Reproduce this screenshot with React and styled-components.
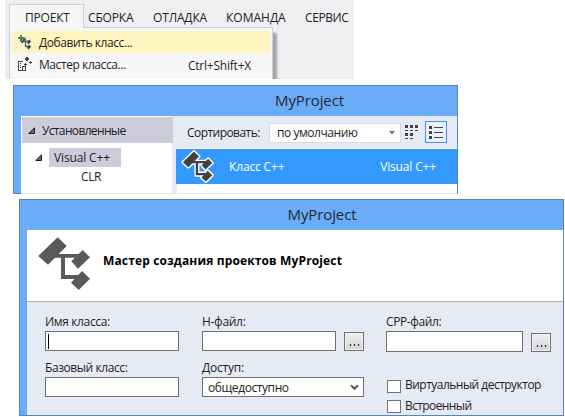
import React from 'react';
import styled, { createGlobalStyle } from 'styled-components';

const Global = createGlobalStyle`
  *, *::before, *::after { box-sizing: border-box; }
  body { margin: 0; background: #fff; overflow: hidden; }
`;

const Page = styled.main`
  width: 565px;
  height: 417px;
  display: flex;
  flex-direction: column;
  align-items: flex-start;
  font: 12px/16px 'Open Sans', 'Noto Sans', sans-serif;
  color: #1e1e1e;
`;

const Text = styled.span`
  white-space: pre;
  letter-spacing: ${(p) => p.$track || 0}px;
`;

/* Menu */
const MenuArea = styled.section`
  width: 349px;
  height: 79px;
  margin-left: 5px;
  padding: 4px 0 0 4px;
  background: #efeff2;
  overflow: hidden;
`;
const MenuBar = styled.nav`
  display: flex;
  height: 24px;
`;
const MenuTab = styled.div`
  position: relative;
  z-index: 1;
  width: 75px;
  height: 24px;
  padding: 5px 0 0 15px;
  border: 1px solid #ccceDB;
  border-bottom: 0;
  background: #f7f7f7;
`;
const MenuTitle = styled.div`
  width: ${(p) => p.$width}px;
  padding: 6px 0 0 4px;
`;
const MenuPopup = styled.div`
  width: 264px;
  height: 60px;
  margin-top: -1px;
  padding: 3px 2px 0;
  border: 1px solid #ccceDB;
  background: #f7f7f7;
  box-shadow: 5px 5px 2px -1px #a5a5a8;
`;
const MenuItem = styled.div`
  display: flex;
  align-items: center;
  height: 22px;
  padding: 1px 19px 0 5px;
  background: ${(p) => (p.$active ? '#fdf4bf' : 'transparent')};
  & > svg { margin: -2px 6px 0 0; }
  & > :nth-child(3) { margin: 3px 0 0 auto; }
`;

/* Windows */
const Window = styled.section`
  width: ${(p) => p.$width}px;
  height: ${(p) => p.$height}px;
  margin: ${(p) => p.$margin};
  border: 1px solid #4d88c4;
  background: #6aacf7;
  display: flex;
  flex-direction: column;
`;
const TitleBar = styled.header`
  height: 30px;
  flex: none;
  display: flex;
  justify-content: center;
  padding: ${(p) => p.$top}px 0 0 ${(p) => p.$shift}px;
  font-size: 15px;
  line-height: 20px;
  color: #262a30;
`;

const TemplateBody = styled.div`
  display: flex;
  width: 436px;
  height: 78px;
  margin-left: 7px;
  flex: none;
  background: #e6eaf5;
`;
const Sidebar = styled.aside`
  width: 151px;
  height: 77px;
  padding: 1px 0 0 1px;
  background: #fff;
`;
const SidebarHeader = styled.div`
  display: flex;
  align-items: center;
  width: 151px;
  height: 26px;
  padding: 1px 0 0 6px;
  background: #ccccdb;
  & > svg { margin-right: 6px; }
`;
const TreeRow = styled.div`
  display: flex;
  align-items: center;
  height: 19px;
  margin-top: 5px;
  padding-left: 13px;
  & > svg { margin-right: 6px; }
`;
const SelectedNode = styled.div`
  width: 72px;
  height: 19px;
  padding: 2px 0 0 5px;
  background: #ccccdb;
`;
const TreeLeaf = styled.div`
  padding: 2px 0 0 59px;
`;
const Templates = styled.div`
  display: flex;
  flex-direction: column;
  width: 280px;
  height: 77px;
  margin-left: 5px;
  background: #fff;
`;
const SortBar = styled.div`
  display: flex;
  flex: none;
  height: 32px;
  padding: 5px 10px 0;
  background: #e6eaf5;
`;
const SortLabel = styled.div`
  width: 82px;
  padding-top: 4px;
`;
const SortSelect = styled.div`
  display: flex;
  align-items: center;
  justify-content: space-between;
  width: 132px;
  height: 20px;
  margin-top: 2px;
  padding: 0 5px 0 7px;
  background: #fff;
  border: 1px solid #d6d9e6;
`;
const GridButton = styled.div`
  width: 24px;
  padding: 4px 0 0 4px;
`;
const ListButton = styled.div`
  display: flex;
  align-items: center;
  justify-content: center;
  width: 22px;
  height: 22px;
  border: 1px solid #3399ff;
  background: #edf1fa;
`;
const TemplateRow = styled.div`
  display: flex;
  align-items: center;
  justify-content: space-between;
  height: 35px;
  margin: 1px 0 0 -1px;
  padding: 0 21px 0 5px;
  background: #3399ff;
  color: #fff;
`;
const TemplateName = styled.div`
  display: flex;
  align-items: center;
  gap: 15px;
`;

/* Wizard */
const WizardHeader = styled.div`
  display: flex;
  width: 536px;
  height: 72px;
  flex: none;
  margin-left: 7px;
  padding: 7px 0 0 11px;
  background: #fff;
  border-bottom: 1px solid #b0b2b3;
`;
const WizardTitle = styled.h1`
  margin: 16px 0 0 13px;
  font-size: 12px;
  line-height: 16px;
  font-weight: 700;
  color: #000;
`;
const WizardForm = styled.div`
  display: flex;
  width: 536px;
  height: 113px;
  flex: none;
  margin-left: 7px;
  padding: 12px 0 0 18px;
  background: #e6eaf5;
`;
const Column = styled.div`
  width: ${(p) => p.$width}px;
`;
const Field = styled.div`
  height: 46px;
`;
const FieldLabel = styled.div`
  height: 17px;
`;
const FieldRow = styled.div`
  display: flex;
  align-items: flex-end;
  height: ${(p) => p.$height || 20}px;
  gap: 8px;
`;
const Input = styled.div`
  width: ${(p) => p.$width || 134}px;
  height: 100%;
  border: 1px solid #707070;
  background: #fff;
  padding: 2px;
`;
const Caret = styled.div`
  width: 1px;
  height: 15px;
  background: #000;
`;
const Browse = styled.div`
  display: flex;
  align-items: flex-end;
  justify-content: center;
  width: 20px;
  height: 19px;
  padding-bottom: 4px;
  gap: 3px;
  border: 1px solid #707070;
  background: linear-gradient(#f0f0f0, #d4d4d4);
  box-shadow: inset 0 0 0 1px #f3f3f3;
`;
const Dot = styled.i`
  width: 1px;
  height: 2px;
  background: #24344c;
  box-shadow: -1px 0 #d9a66b66, 1px 0 #6aa8dd77;
`;
const Select = styled(Input)`
  display: flex;
  align-items: center;
  justify-content: space-between;
  width: 162px;
  padding: 1px 4px 0 5px;
`;
const Checks = styled.div`
  display: flex;
  flex-direction: column;
  gap: 5px;
  padding: 25px 0 0 1px;
`;
const Check = styled.div`
  display: flex;
  align-items: flex-start;
  height: 16px;
  gap: 4px;
`;
const CheckBox = styled.i`
  width: 14px;
  height: 13px;
  margin-top: ${(p) => p.$drop}px;
  border: 1px solid #707070;
  background: #fff;
`;

const ClassShape = () => (
  <>
    <path d="M.3 19 19.7.3 28.7 9 10 27.7z" />
    <path d="M15 17H46V20.8H27V38H44V42H23V20.8H15z" />
    <path d="M33.3 24.3 44.7 13 52 20.3 40 31.7z" />
    <path d="M33 45.7 44 34 52 41.7 40.7 53z" />
  </>
);
const ClassIcon = () => (
  <svg width="52" height="53" viewBox="0 0 52 53" fill="#58595b"><ClassShape /></svg>
);
const ClassIconOutlined = () => (
  <svg width="33" height="33" viewBox="-2.5 -2.5 57 58">
    <g fill="#fff" stroke="#fff" strokeWidth="5" strokeLinejoin="round"><ClassShape /></g>
    <g fill="#424242"><ClassShape /></g>
  </svg>
);
const AddClassIcon = () => (
  <svg width="16" height="16" viewBox="0 0 16 16">
    <g transform="translate(3.3 2.7) scale(.205 .24)">
      <g fill="#fff" stroke="#fff" strokeWidth="7"><ClassShape /></g>
      <g fill="#424242" stroke="#424242" strokeWidth="1.5"><ClassShape /></g>
    </g>
    <path d="M2.5 0h3v2h2v3h-2v2h-3V5h-2V2h2z" fill="#fff" />
    <path d="M3 1h2v2h2v2H5v2H3V5H1V3h2z" fill="#388a34" />
  </svg>
);
const WizardIcon = () => (
  <svg width="16" height="16" viewBox="0 0 16 16" fill="#424242">
    <path d="M1 5h5v1H2v8h3v-4h4v5H1zM6 11v3h2v-3z" fillRule="evenodd" />
    <path d="M3 7h1v1H3zM3 9h1v1H3zM3 11h1v1H3zM9 1h2v1h1v2h-1v1H9V4H8V2h1zM13 5h1v1h1v1h-1v1h-1V7h-1V6h1zM8 7h1v1h1v1H9v1H8V9H7V8h1z" />
  </svg>
);
const Expander = () => (
  <svg width="8" height="8" viewBox="0 0 8 8"><path d="M6.5 .8V6.5H.8z" fill="#686870" stroke="#1e1e1e" /></svg>
);
const GridIcon = () => (
  <svg width="14" height="15" viewBox="0 0 14 15" fill="#424242">
    {[0, 8].map((y) => [0, 5, 10].map((x) => (y === 8 && x === 10 ? null : (
      <path key={`${x}-${y}`} d={`M${x} ${y}h3v3h-3zM${x} ${y + 5}h3v1h-3z`} />
    ))))}
  </svg>
);
const ListIcon = () => (
  <svg width="14" height="13" viewBox="0 0 14 13" fill="#424242">
    {[0, 5, 10].map((y) => <path key={y} d={`M0 ${y}h3v3H0zM5 ${y + 1}h9v1H5z`} />)}
  </svg>
);

const BrowseButton = () => <Browse><Dot /><Dot /><Dot /></Browse>;

export default function App() {
  return (
    <Page>
      <Global />
      <MenuArea>
        <MenuBar>
          <MenuTab><Text $track={-0.2}>ПРОЕКТ</Text></MenuTab>
          <MenuTitle $width={65}><Text $track={-0.15}>СБОРКА</Text></MenuTitle>
          <MenuTitle $width={73}><Text $track={-0.15}>ОТЛАДКА</Text></MenuTitle>
          <MenuTitle $width={79}><Text>КОМАНДА</Text></MenuTitle>
          <MenuTitle $width={50}><Text $track={-0.4}>СЕРВИС</Text></MenuTitle>
        </MenuBar>
        <MenuPopup>
          <MenuItem $active><AddClassIcon /><Text $track={-0.42}>Добавить класс...</Text></MenuItem>
          <MenuItem><WizardIcon /><Text $track={-0.42}>Мастер класса...</Text><Text $track={-0.22}>Ctrl+Shift+X</Text></MenuItem>
        </MenuPopup>
      </MenuArea>

      <Window $width={445} $height={109} $margin="6px 0 0 13px">
        <TitleBar $top={4} $shift={148}><Text $track={-0.1}>MyProject</Text></TitleBar>
        <TemplateBody>
          <Sidebar>
            <SidebarHeader><Expander /><Text $track={-0.65}>Установленные</Text></SidebarHeader>
            <TreeRow><Expander /><SelectedNode><Text $track={-0.15}>Visual C++</Text></SelectedNode></TreeRow>
            <TreeLeaf><Text $track={-0.4}>CLR</Text></TreeLeaf>
          </Sidebar>
          <Templates>
            <SortBar>
              <SortLabel><Text $track={-0.55}>Сортировать:</Text></SortLabel>
              <SortSelect>
                <Text $track={-0.45}>по умолчанию</Text>
                <svg width="6" height="4" viewBox="0 0 6 4"><path d="M0 0h6L3 3.5z" fill="#717171" /></svg>
              </SortSelect>
              <GridButton><GridIcon /></GridButton>
              <ListButton><ListIcon /></ListButton>
            </SortBar>
            <TemplateRow>
              <TemplateName><ClassIconOutlined /><Text $track={-0.15}>Класс C++</Text></TemplateName>
              <Text $track={-0.15}>Visual C++</Text>
            </TemplateRow>
          </Templates>
        </TemplateBody>
      </Window>

      <Window $width={545} $height={217} $margin="5px 0 0 19px">
        <TitleBar $top={4} $shift={61}><Text $track={-0.1}>MyProject</Text></TitleBar>
        <WizardHeader>
          <ClassIcon />
          <WizardTitle><Text $track={0.14}>Мастер создания проектов MyProject</Text></WizardTitle>
        </WizardHeader>
        <WizardForm>
          <Column $width={157}>
            <Field>
              <FieldLabel><Text $track={-0.36}>Имя класса:</Text></FieldLabel>
              <FieldRow><Input><Caret /></Input></FieldRow>
            </Field>
            <Field>
              <FieldLabel><Text $track={-0.42}>Базовый класс:</Text></FieldLabel>
              <FieldRow><Input /></FieldRow>
            </Field>
          </Column>
          <Column $width={184}>
            <Field>
              <FieldLabel><Text $track={-0.3}>H-файл:</Text></FieldLabel>
              <FieldRow><Input /><BrowseButton /></FieldRow>
            </Field>
            <Field>
              <FieldLabel><Text $track={-0.2}>Доступ:</Text></FieldLabel>
              <FieldRow>
                <Select>
                  <Text $track={-0.42}>общедоступно</Text>
                  <svg width="9" height="7" viewBox="0 0 9 7"><path d="M1 1.3 4.5 4.8 8 1.3" fill="none" stroke="#555" strokeWidth="2" /></svg>
                </Select>
              </FieldRow>
            </Field>
          </Column>
          <Column $width={170}>
            <FieldLabel><Text $track={-0.4}>CPP-файл:</Text></FieldLabel>
            <FieldRow $height={21}><Input $width={137} /><BrowseButton /></FieldRow>
            <Checks>
              <Check><CheckBox $drop={3} /><Text $track={-0.52}>Виртуальный деструктор</Text></Check>
              <Check><CheckBox $drop={2} /><Text $track={-0.6}>Встроенный</Text></Check>
            </Checks>
          </Column>
        </WizardForm>
      </Window>
    </Page>
  );
}
